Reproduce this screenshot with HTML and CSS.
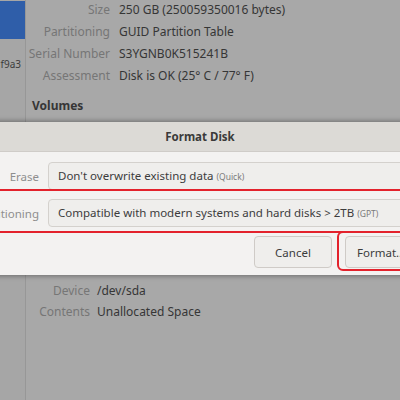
FILE: index.html
```html
<!DOCTYPE html>
<html>
<head>
<meta charset="utf-8">
<link rel="stylesheet" href="styles.css">
</head>
<body>
<div class="screen">
  <div class="app">
    <aside class="sidebar">
      <div class="side-item selected"></div>
      <div class="side-sub"><span>f9a3</span></div>
    </aside>
    <main class="main">
      <div class="props top">
        <span class="lbl">Size</span><span class="val">250 GB (250059350016 bytes)</span>
        <span class="lbl">Partitioning</span><span class="val">GUID Partition Table</span>
        <span class="lbl">Serial Number</span><span class="val">S3YGNB0K515241B</span>
        <span class="lbl">Assessment</span><span class="val">Disk is OK (25° C / 77° F)</span>
      </div>
      <h3 class="volumes">Volumes</h3>
      <div class="volume-area"></div>
      <div class="props bottom">
        <span class="lbl">Device</span><span class="val">/dev/sda</span>
        <span class="lbl">Contents</span><span class="val">Unallocated Space</span>
      </div>
    </main>
  </div>

  <div class="dialog">
    <div class="dlg-header">Format Disk</div>
    <div class="dlg-body">
      <div class="form-row">
        <span class="flabel">Erase</span>
        <div class="combo">Don't overwrite existing data <small>(Quick)</small></div>
      </div>
      <div class="form-row">
        <span class="flabel">Partitioning</span>
        <div class="combo">Compatible with modern systems and hard disks &gt; 2TB <small>(GPT)</small></div>
      </div>
      <div class="actions">
        <button class="btn">Cancel</button>
        <button class="btn">Format...</button>
      </div>
    </div>
  </div>

  <div class="mark mark-row"></div>
  <div class="mark mark-btn"></div>
</div>
</body>
</html>
```

FILE: styles.css
```css
* { box-sizing: border-box; }
html, body { margin: 0; padding: 0; }
body {
  font-family: "Noto Sans", "Open Sans", sans-serif;
  font-size: 12px;
}
.screen {
  position: relative;
  width: 400px;
  height: 400px;
  overflow: hidden;
  background: #a8a8a8;
}
.app {
  display: flex;
  height: 400px;
}
.sidebar {
  width: 26px;
  border-right: 1px solid #979797;
  background: #a6a6a6;
  display: flex;
  flex-direction: column;
  padding-top: 1px;
}
.side-item.selected {
  height: 38px;
  background: #2f5ea9;
}
.side-sub {
  margin-top: 18px;
  height: 14px;
  font-size: 10px;
  color: #3c3c3c;
  display: flex;
  justify-content: flex-end;
  padding-right: 4px;
  white-space: nowrap;
  overflow: hidden;
}
.main {
  flex: 1;
}
.props {
  display: grid;
  align-items: center;
}
.props.top {
  grid-template-columns: 84px auto;
  column-gap: 9px;
  grid-auto-rows: 22px;
  margin-top: -2px;
}
.props.bottom {
  grid-template-columns: 64px auto;
  column-gap: 7px;
  grid-auto-rows: 21px;
}
.lbl {
  text-align: right;
  color: #767676;
  white-space: nowrap;
}
.val {
  color: #363636;
  white-space: nowrap;
}
.volumes {
  margin: 10px 0 0 6px;
  font-size: 12px;
  font-weight: bold;
  color: #363636;
  height: 20px;
  line-height: 20px;
}
.volume-area {
  height: 164px;
}

.dialog {
  position: absolute;
  left: -60px;
  top: 122px;
  width: 520px;
  height: 153px;
  background: #f3f2f1;
  box-shadow: 0 0 5px 1px rgba(0, 0, 0, 0.35);
  display: flex;
  flex-direction: column;
  font-size: 11.5px;
}
.dlg-header {
  height: 30px;
  background: #dcdad6;
  border-bottom: 1px solid #cfccc8;
  text-align: center;
  line-height: 29px;
  font-weight: bold;
  color: #3a3a3a;
}
.dlg-body {
  padding-top: 10px;
  display: flex;
  flex-direction: column;
  gap: 9px;
}
.form-row {
  display: grid;
  grid-template-columns: 99px 1fr;
  column-gap: 9px;
  align-items: center;
  height: 28px;
}
.flabel {
  text-align: right;
  color: #8e8e8e;
  white-space: nowrap;
}
.combo {
  height: 28px;
  line-height: 26px;
  padding-left: 9px;
  background: #efeeec;
  border: 1px solid #d4d1cd;
  border-radius: 4px;
  color: #3c3c3c;
  white-space: nowrap;
}
.combo small {
  font-size: 8.5px;
  color: #7a7a7a;
}
.actions {
  display: flex;
  gap: 13px;
  padding-left: 314px;
  height: 32px;
}
.btn {
  font-family: inherit;
  font-size: 11.5px;
  color: #3c3c3c;
  background: #efeeec;
  border: 1px solid #cfcbc7;
  border-radius: 4px;
  height: 32px;
  padding: 0;
}
.btn:first-child { width: 78px; }
.btn:last-child { width: 90px; text-align: left; padding-left: 11px; }

.mark {
  position: absolute;
  border: 2px solid #e3222c;
  border-radius: 6px;
}
.mark-row {
  left: -10px;
  width: 420px;
  top: 189px;
  height: 44px;
}
.mark-btn {
  left: 337px;
  width: 80px;
  top: 231px;
  height: 40px;
}
```
